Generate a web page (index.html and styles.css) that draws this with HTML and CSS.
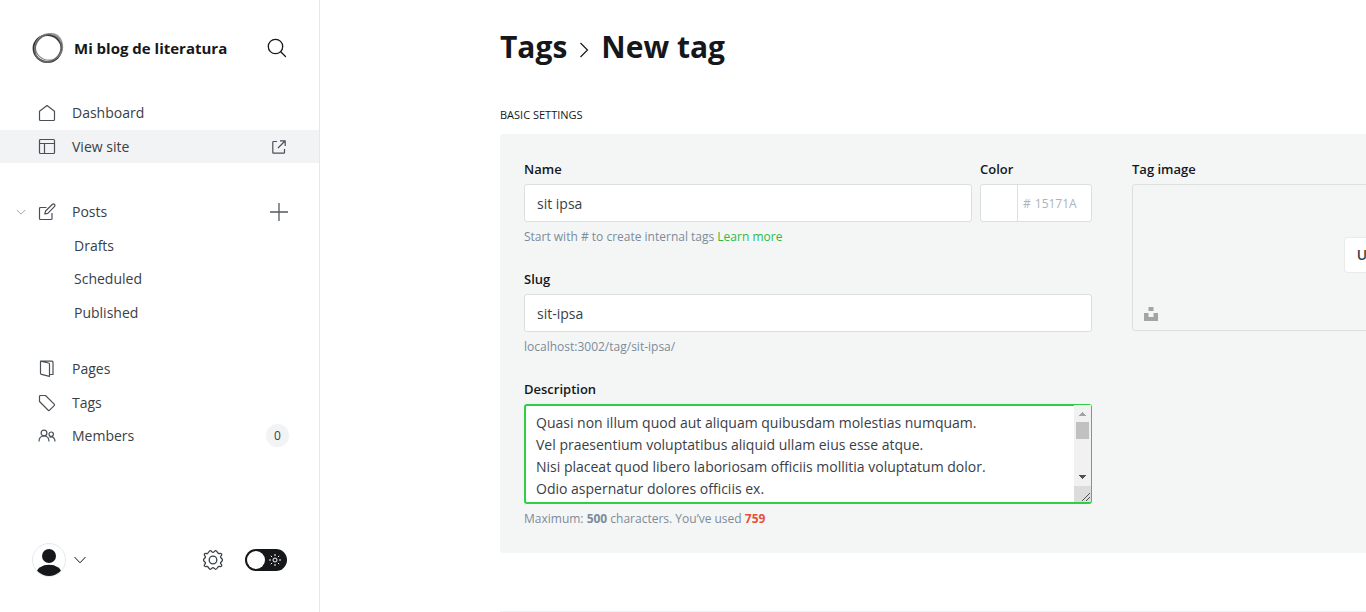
FILE: index.html
```html
<!DOCTYPE html>
<html lang="en">
<head>
<meta charset="utf-8">
<title>New tag</title>
<link rel="stylesheet" href="styles.css">
</head>
<body>
<div class="app">
  <nav class="sidebar" aria-label="Main">
    <header class="site">
      <svg class="site-logo" viewBox="0 0 32 32" fill="none" stroke="#333">
        <ellipse cx="15.500" cy="16.500" rx="14" ry="13.400" stroke-width="1.800"/>
        <ellipse cx="17" cy="15" rx="13.600" ry="13.200" stroke-width="1.200" stroke="#888"/>
        <ellipse cx="16.200" cy="16" rx="12.600" ry="14.400" stroke-width="1.600" stroke="#666" transform="rotate(35 16 16)"/>
        <path d="M19 1.800c4 .2 8.500 2.700 10.500 8" stroke="#999" stroke-width="2"/>
      </svg>
      <span class="site-name">Mi blog de literatura</span>
      <button class="icon-button" aria-label="Search">
        <svg width="20" height="20" viewBox="0 0 20 20" fill="none" stroke="#15171a" stroke-width="1.3" stroke-linecap="round"><circle cx="8.500" cy="8.500" r="7.200"/><path d="M13.700 13.700l4.800 4.800"/></svg>
      </button>
    </header>
    <ul class="menu">
      <li class="item"><a href="#" class="link">
        <svg class="icon" viewBox="0 0 18 18"><path d="M1.500 7.200L9 1.500l7.500 5.700V15.500a1 1 0 0 1-1 1h-13a1 1 0 0 1-1-1z"/></svg>Dashboard</a></li>
      <li class="item active"><a href="#" class="link">
        <svg class="icon" viewBox="0 0 18 18"><rect x="1.500" y="1.500" width="15" height="14" rx="1"/><path d="M1.500 5.500h15M6.500 5.500v10"/></svg>View site
        <svg class="icon trail" viewBox="0 0 14 14"><path d="M5 1.500H1.500a.7.700 0 0 0-.7.700v10.300a.7.700 0 0 0 .7.700h10.300a.7.700 0 0 0 .7-.7V9M8 .8H13.200V6M13 1L6 8"/></svg></a></li>
    </ul>
    <ul class="menu posts">
      <li class="item">
        <button class="fold" aria-label="Collapse posts"><svg width="10" height="10" viewBox="0 0 10 10" fill="none" stroke="#a0a7b0"><path d="M.8 3L5 7.200 9.200 3"/></svg></button>
        <a href="#" class="link">
        <svg class="icon" viewBox="0 0 18 18"><path d="M8.500 4.500H2.500a1 1 0 0 0-1 1v10a1 1 0 0 0 1 1h10.500a1 1 0 0 0 1-1V10M6.800 11l.8-3L14.200 1.500a1.500 1.500 0 0 1 2.200 2.200L9.800 10.300z"/></svg>Posts</a>
        <button class="add" aria-label="New post"><svg width="18" height="18" viewBox="0 0 18 18" fill="none" stroke="#54595f" stroke-width="1.300"><path d="M9 0v18M0 9h18"/></svg></button></li>
      <li class="item"><a href="#" class="link sub">Drafts</a></li>
      <li class="item"><a href="#" class="link sub">Scheduled</a></li>
      <li class="item"><a href="#" class="link sub">Published</a></li>
    </ul>
    <ul class="menu">
      <li class="item"><a href="#" class="link">
        <svg class="icon" viewBox="0 0 18 18"><path d="M2.500 1.200l8 1.800a1 1 0 0 1 1 1V16.300l-8-2a1 1 0 0 1-1-1zM2.500 1.200H14a1 1 0 0 1 1 1V14.500h-3.500"/></svg>Pages</a></li>
      <li class="item"><a href="#" class="link">
        <svg class="icon" viewBox="0 0 18 18"><path d="M1.500 2.500a1 1 0 0 1 1-1H7.500L16.200 10.200a1 1 0 0 1 0 1.400L11.600 16.200a1 1 0 0 1-1.400 0L1.500 7.500z"/></svg>Tags</a></li>
      <li class="item"><a href="#" class="link">
        <svg class="icon" viewBox="0 0 18 18"><circle cx="6" cy="6" r="2.900"/><path d="M1 14.500c0-3.500 2-5.500 5-5.500s5 2 5 5.500"/><circle cx="13.200" cy="7.200" r="2.200"/><path d="M11.500 10.200c2.800-1.200 5.500.5 5.500 4.300"/></svg>Members
        <span class="count">0</span></a></li>
    </ul>
    <footer class="account">
      <button class="user" aria-label="Account">
        <span class="avatar"><svg width="32" height="32" viewBox="0 0 32 32" fill="#15171a"><circle cx="16" cy="12" r="7"/><ellipse cx="16" cy="29" rx="12.500" ry="8.300"/></svg></span>
        <svg width="12" height="8" viewBox="0 0 12 8" fill="none" stroke="#15171a"><path d="M.5 1L6 6.800 11.500 1"/></svg>
      </button>
      <button class="icon-button gear" aria-label="Settings"><svg width="20" height="20" viewBox="0 0 20 20" fill="none" stroke="#394047" stroke-width="1.300" stroke-linejoin="round"><circle cx="10" cy="10" r="3.800"/><path d="M10 2.400C11.200 2.400 11.400.6 12.700.7S14.400 2.800 15.400 3.400 17.800 2.800 18.600 4 17.300 6.200 17.500 7.200 19.500 8.700 19.500 10 17.700 11.800 17.500 12.800 19.300 14.800 18.600 16 16.300 16 15.400 16.600 14 19.200 12.700 19.300 11.200 17.600 10 17.600 8.600 19.400 7.300 19.300 5.600 17.200 4.600 16.600 2.200 17.200 1.400 16 2.700 13.800 2.500 12.800.5 11.300.5 10 2.300 8.200 2.500 7.200.7 5.200 1.400 4 3.700 4 4.600 3.400 6 .8 7.300.7 8.800 2.400 10 2.400z"/></svg></button>
      <label class="switch"><input type="checkbox" aria-label="Dark mode"><svg width="12" height="12" viewBox="0 0 12 12" fill="none" stroke="#fff"><circle cx="6" cy="6" r="2"/><path d="M6 0v2M6 10v2M0 6h2M10 6h2M1.800 1.800l1.300 1.300M8.900 8.900l1.300 1.300M1.800 10.200l1.300-1.300M8.900 3.100l1.300-1.300"/></svg></label>
    </footer>
  </nav>
  <main class="main">
    <form class="canvas">
      <h1 class="title"><a href="#">Tags</a><svg class="chevron" width="10" height="16" viewBox="0 0 10 16" fill="none" stroke="#15171a" stroke-width="1.200"><path d="M1.500 1L8.500 8l-7 7"/></svg>New tag</h1>
      <h2 class="section">Basic settings</h2>
      <section class="panel">
        <div class="column">
          <div class="pair">
            <div class="field grow"><label for="name">Name</label><input id="name" class="input" type="text" value="sit ipsa">
              <p class="hint">Start with # to create internal tags <a href="#">Learn more</a></p></div>
            <div class="field"><label for="color">Color</label>
              <div class="color"><span class="swatch"></span><span class="hash">#</span><input id="color" type="text" placeholder="15171A"></div></div>
          </div>
          <div class="field"><label for="slug">Slug</label><input id="slug" class="input" type="text" value="sit-ipsa">
            <p class="hint">localhost:3002/tag/sit-ipsa/</p></div>
          <div class="field"><label for="description">Description</label>
            <div class="area-wrap">
            <textarea id="description" class="input area">Quasi non illum quod aut aliquam quibusdam molestias numquam.
Vel praesentium voluptatibus aliquid ullam eius esse atque.
Nisi placeat quod libero laboriosam officiis mollitia voluptatum dolor.
Odio aspernatur dolores officiis ex.</textarea>
              <svg class="scrollbar" width="17" height="97" viewBox="0 0 17 97" shape-rendering="crispEdges"><path d="M0 0h17v97H0z" fill="#f1f1f1"/><path d="M5 11h7L8.500 7z" fill="#a3a3a3"/><path d="M2 17h13v17H2z" fill="#c1c1c1"/><path d="M5 70h7l-3.500 4z" fill="#505050"/><path d="M0 81h17v16H0z" fill="#dcdcdc"/><path d="M8 96l8-8M12 96l4-4" stroke="#505050" fill="none"/></svg>
            </div>
            <p class="hint">Maximum: <b>500</b> characters. You’ve used <b class="over">759</b></p></div>
        </div>
        <div class="column">
          <div class="field"><span class="label">Tag image</span>
            <div class="upload"><button type="button" class="upload-button">Upload tag image</button>
              <svg class="unsplash" width="14" height="14" viewBox="0 0 14 14" fill="#a3a5a5"><path d="M4.500 0h5v4h-5zM0 6h4.500v4h5V6H14v8H0z"/></svg></div></div>
        </div>
      </section>
      <hr class="rule">
    </form>
  </main>
</div>
</body>
</html>
```
FILE: styles.css
```css
* { box-sizing: border-box; }
body { margin: 0; font-family: "Open Sans", "Noto Sans", sans-serif; font-size: 14px; color: #394047; background: #fff; }
a { color: inherit; text-decoration: none; }
button { border: 0; padding: 0; background: none; font: inherit; color: inherit; cursor: pointer; }
svg { display: block; flex: none; }
.app { display: flex; height: 100vh; overflow: hidden; }
.sidebar { flex: none; width: 320px; display: flex; flex-direction: column; border-right: 1px solid #e6e8ea; }
.site { display: flex; align-items: center; padding: 32px 32px 0; height: 64px; margin-bottom: 32px; }
.site-logo { width: 32px; height: 32px; margin-right: 10px; }
.site-name { flex: 1; font-size: 15px; line-height: 20px; padding-bottom: 1px; font-weight: 700; color: #15171a; white-space: nowrap; }
.menu { list-style: none; margin: 0 0 32px; padding: 0; }
.menu.posts { margin-bottom: 23px; }
.item { position: relative; display: flex; align-items: center; height: 33px; }
.item + .item { margin-top: 1px; }
.item:nth-child(3) { margin-top: 0; }
.active { background: #f1f3f4; }
.link { flex: 1; display: flex; align-items: center; height: 100%; padding: 0 32px 0 38px; }
.icon { width: 18px; height: 18px; margin-right: 16px; fill: none; stroke: #4a5058; stroke-width: 1.2; stroke-linejoin: round; }
.trail { width: 14px; height: 14px; margin: 0 1px 0 auto; }
.sub { padding-left: 74px; }
.fold { position: absolute; left: 16px; }
.add { margin-right: 31px; }
.count { margin: 0 -2px 0 auto; width: 23px; height: 23px; border-radius: 50%; background: #f1f3f4; font-size: 12px; line-height: 23px; text-align: center; }
.account { margin-top: auto; display: flex; align-items: center; padding: 0 32px 35px; }
.user { display: flex; align-items: center; gap: 8px; margin-right: auto; }
.avatar { border: 1px solid #e6e8ea; border-radius: 50%; overflow: hidden; }
.gear { margin-right: 22px; }
.switch { position: relative; display: flex; align-items: center; justify-content: flex-end; width: 42px; height: 22px; padding-right: 6px; border-radius: 11px; background: #15171a; }
.switch input { position: absolute; left: 2px; top: 2px; width: 18px; height: 18px; margin: 0; appearance: none; border-radius: 50%; background: #fff; }
.main { flex: 1; min-width: 0; overflow: hidden; padding: 24px 0 0 180px; }
.canvas { min-width: 1224px; }
.title { display: flex; align-items: center; gap: 12px; margin: 0; font-size: 30px; line-height: 46px; color: #15171a; }
.chevron { margin-top: 6px; }
.section { margin: 36px 0 10px; font-size: 11px; font-weight: 500; line-height: 18px; text-transform: uppercase; color: #15171a; }
.panel { display: grid; grid-template-columns: 1fr 1fr; gap: 40px; padding: 25px 24px; background: #f4f6f6; border-radius: 3px; }
.column { display: flex; flex-direction: column; gap: 23px; min-width: 0; }
.pair { display: flex; gap: 8px; }
.field { display: flex; flex-direction: column; }
.grow { flex: 1; }
.field label, .label { margin-bottom: 5px; font-size: 13px; font-weight: 600; line-height: 20px; color: #15171a; }
.input, .color { height: 38px; border: 1px solid #dddfdf; border-radius: 3px; background: #fff; }
.input { width: 100%; padding: 0 12px; font: inherit; color: #394047; outline: 0; }
.hint { margin: 5px 0 0; font-size: 12px; line-height: 19px; color: #7c8b9a; }
.hint a { color: #30b93f; }
.hint .over { color: #e8503a; }
.color { display: flex; align-items: center; width: 112px; color: #abb4be; }
.swatch { width: 37px; height: 100%; margin-right: 5px; border-right: 1px solid #dddfdf; }
.color input { width: 56px; margin-left: 4px; padding: 0; border: 0; outline: 0; font: inherit; font-size: 12px; }
.color input::placeholder { color: #abb4be; }
.hash { font-size: 12px; }
.area-wrap { position: relative; }
.area { display: block; height: 100px; padding: 6px 24px 0 10px; border: 2px solid #30cf43; border-right-width: 1px; line-height: 22px; resize: none; overflow: hidden; }
.scrollbar { position: absolute; right: 1px; top: 1px; }
.upload { position: relative; display: flex; align-items: center; justify-content: center; height: 147px; padding-bottom: 6px; border: 1px solid #dddfdf; border-radius: 3px; }
.upload-button { width: 142px; height: 34px; border-radius: 3px; background: #fff; box-shadow: 0 0 1px 1px rgba(0,0,0,.05); font-weight: 600; font-size: 14px; }
.unsplash { position: absolute; left: 11px; bottom: 9px; }
.rule { margin: 58px 0 0; border: 0; border-top: 1px solid #f0f1f2; }
```
